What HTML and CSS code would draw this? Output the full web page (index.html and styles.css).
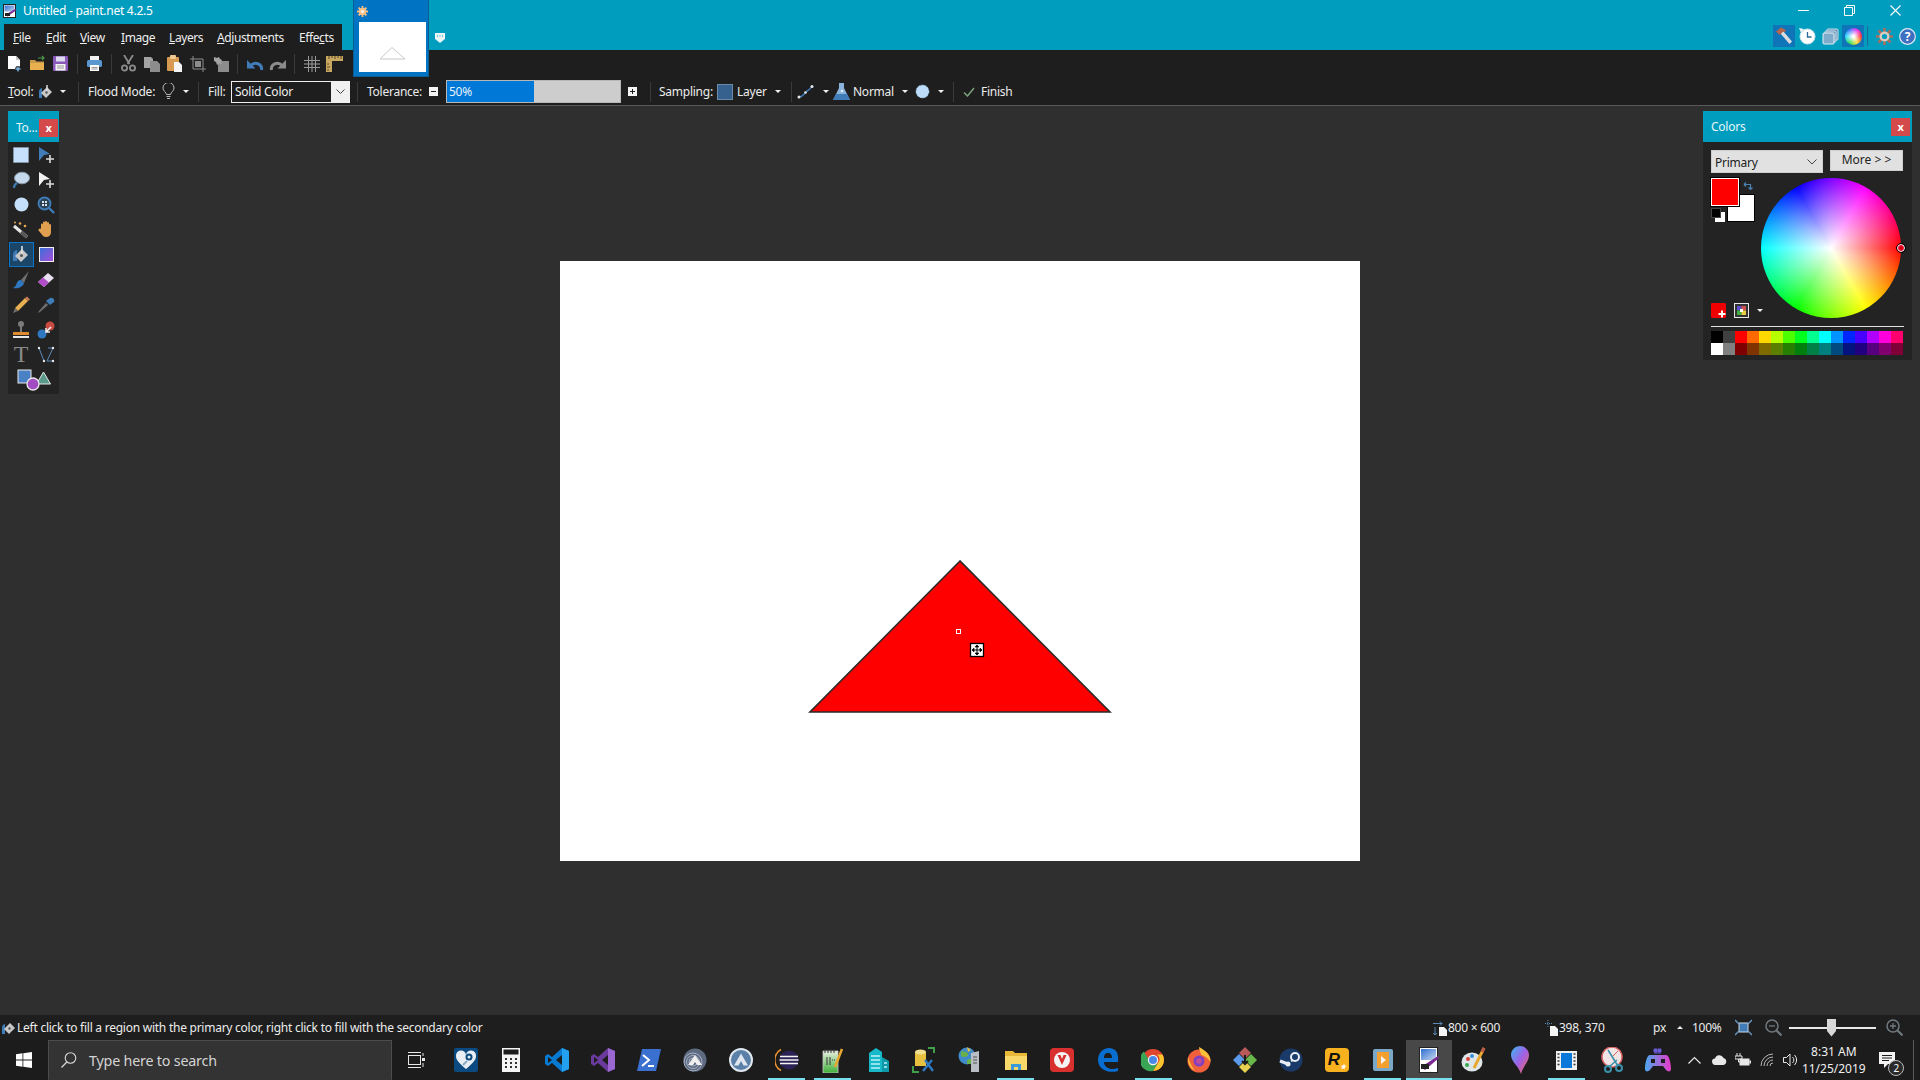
FILE: index.html
```html
<!DOCTYPE html>
<html lang="en">
<head>
<meta charset="utf-8">
<title>Untitled - paint.net 4.2.5</title>
<link rel="stylesheet" href="styles.css">
</head>
<body>
<svg class="defs" width="0" height="0">
  <defs>
    <linearGradient id="gDoc" x1="0" y1="0" x2="1" y2="1"><stop offset="0" stop-color="#2f6fd0"/><stop offset="1" stop-color="#c8d8f0"/></linearGradient>
    <linearGradient id="gPad" x1="0" y1="0" x2="1" y2="0"><stop offset="0" stop-color="#4aa8f0"/><stop offset="1" stop-color="#e83ac8"/></linearGradient>
    <linearGradient id="gBalloon" x1="0" y1="0" x2="1" y2="1"><stop offset="0" stop-color="#3ab8f0"/><stop offset=".5" stop-color="#a060e8"/><stop offset="1" stop-color="#f06a50"/></linearGradient>
    <linearGradient id="gNote" x1="0" y1="0" x2="0" y2="1"><stop offset="0" stop-color="#e8efe0"/><stop offset="1" stop-color="#3fb03a"/></linearGradient>
  </defs>
</svg>
<div class="app">
  <header class="titlebar">
    <div class="caption">
      <svg class="app-icon" width="14" height="14" viewBox="0 0 14 14"><rect x=".5" y=".5" width="12" height="13" fill="#fff" stroke="#222"/><rect x="1.500" y="1.500" width="10" height="6" fill="url(#gDoc)"/><path d="M2 11l10-6 1.500 1-9 6.500z" fill="#7a2a90"/><rect x="2" y="9" width="5" height="3" fill="#222"/></svg>
      <span class="app-title">Untitled - paint.net 4.2.5</span>
      <div class="winbtns">
        <span class="winbtn"><svg width="11" height="11" viewBox="0 0 11 11"><path d="M0 5.500h11" stroke="#fff"/></svg></span>
        <span class="winbtn"><svg width="11" height="11" viewBox="0 0 11 11"><path d="M.5 2.500h8v8h-8zM2.500 2.500v-2h8v8h-2" fill="none" stroke="#fff"/></svg></span>
        <span class="winbtn"><svg width="11" height="11" viewBox="0 0 11 11"><path d="M.5.500l10 10M10.500.500l-10 10" stroke="#fff" stroke-width="1.100"/></svg></span>
      </div>
    </div>
    <div class="menurow">
      <nav class="menu">
        <span class="m-33"><u>F</u>ile</span><span class="m-34"><u>E</u>dit</span><span class="m-41"><u>V</u>iew</span><span class="m-48"><u>I</u>mage</span><span class="m-48"><u>L</u>ayers</span><span class="m-82"><u>A</u>djustments</span><span>Effe<u>c</u>ts</span>
      </nav>
      <div class="wintools">
        <span class="wintool on"><svg width="18" height="18" viewBox="0 0 18 18"><path d="M5.500 6.500l2.500-2.500 9 10.500-2.500 2.500z" fill="#dcdcdc"/><path d="M1 4.500L6 .5l5 2.500-1 2-2-.5-3 3.500z" fill="#b5654a"/></svg></span>
        <span class="wintool"><svg width="18" height="18" viewBox="0 0 18 18"><circle cx="9.500" cy="9.500" r="7.500" fill="#fff" stroke="#cfe6f0"/><path d="M9.500 5v5h4" fill="none" stroke="#2a6a9a" stroke-width="1.300"/><path d="M1 1l5 1-3 4z" fill="#e8f0f4"/></svg></span>
        <span class="wintool"><svg width="17" height="17" viewBox="0 0 17 17"><rect x="5" y="1" width="11" height="11" rx="1" fill="#5d8fb8" stroke="#cfe0ea"/><rect x="3" y="3" width="11" height="11" rx="1" fill="#6d9cc0" stroke="#cfe0ea"/><rect x="1" y="5" width="11" height="11" rx="1" fill="#7faccb" stroke="#e6eff4"/></svg></span>
        <span class="wintool on"><span class="mini-wheel"></span></span>
        <span class="wintool-sep"></span>
        <span class="wintool"><svg width="17" height="17" viewBox="0 0 17 17"><g stroke="#a8705c" stroke-width="2.600"><path d="M8.500 0v17M0 8.500h17M2.500 2.500l12 12M14.500 2.500l-12 12"/></g><circle cx="8.500" cy="8.500" r="5" fill="#d8ccc0"/><circle cx="8.500" cy="8.500" r="2.600" fill="#009dbe"/></svg></span>
        <span class="wintool"><svg width="17" height="17" viewBox="0 0 17 17"><circle cx="8.500" cy="8.500" r="7.800" fill="#3f6fc0" stroke="#e0e8f4" stroke-width="1.200"/><text x="8.500" y="13" class="help-mark">?</text></svg></span>
      </div>
    </div>
  </header>

  <div class="doctab">
    <svg class="doctab-gear" width="11" height="11" viewBox="0 0 11 11"><g stroke="#ffc080" stroke-width="1.800"><path d="M5.500 0v11M0 5.500h11M1.600 1.600l7.800 7.800M9.400 1.600l-7.800 7.800"/></g><circle cx="5.500" cy="5.500" r="3.600" fill="#ffc48a"/><circle cx="5.500" cy="5.500" r="1.400" fill="#f5f5f5"/></svg>
    <div class="doctab-thumb"><svg width="67" height="50" viewBox="0 0 67 50"><path d="M33 25.500L21 37h25z" fill="#fff" stroke="#c8c8c8"/></svg></div>
  </div>
  <svg class="doctab-more" width="10" height="10" viewBox="0 0 10 10"><path d="M0 0h10v6l-5 4-5-4z" fill="#e8f6fa"/><path d="M2 3h1M4.500 3h1M7 3h1" stroke="#0b8db0"/></svg>

  <div class="toolbar row-one">
    <span class="tb"><svg width="17" height="17" viewBox="0 0 17 17"><path d="M2 1h8l4 4v9H2z" fill="#fff"/><path d="M10 1v4h4" fill="#c8c8c8"/><path d="M12 11v6M9 14h6" stroke="#1e1e1e" stroke-width="3.200"/><path d="M12 11.500v5M9.500 14h5" stroke="#7fb8e8" stroke-width="1.400"/></svg></span>
    <span class="tb"><svg width="17" height="17" viewBox="0 0 17 17"><path d="M1 5h5l1.500 1.500H15V15H1z" fill="#c89a4a"/><path d="M1 8h14v7H1z" fill="#e8b04e"/><path d="M9 3h5M13 1l2 2-2 2" fill="none" stroke="#4f9a4a" stroke-width="1.200"/></svg></span>
    <span class="tb"><svg width="17" height="17" viewBox="0 0 17 17"><rect x="1" y="1" width="15" height="15" rx="1" fill="#8a58b8"/><rect x="4" y="1.500" width="9" height="5" fill="#dcdcf0"/><rect x="3.500" y="9" width="10" height="6.500" fill="#f5f5f5"/><path d="M5 11h7M5 13h7" stroke="#999"/></svg></span>
    <span class="tb-sep"></span>
    <span class="tb"><svg width="17" height="17" viewBox="0 0 17 17"><rect x="4" y="1" width="9" height="5" fill="#f0f0f0"/><rect x="1" y="5" width="15" height="7" rx="1.500" fill="#5a96d0"/><rect x="4" y="10" width="9" height="6" fill="#fff"/><path d="M5.500 12.500h6M5.500 14h6" stroke="#999"/></svg></span>
    <span class="tb-sep"></span>
    <span class="tb"><svg width="15" height="17" viewBox="0 0 15 17"><path d="M3 0l5.500 9M12 0L6.500 9" stroke="#8c8c8c" stroke-width="1.800"/><circle cx="3.500" cy="13" r="2.600" fill="none" stroke="#8c8c8c" stroke-width="1.800"/><circle cx="11.500" cy="13" r="2.600" fill="none" stroke="#8c8c8c" stroke-width="1.800"/></svg></span>
    <span class="tb"><svg width="16" height="16" viewBox="0 0 16 16"><path d="M0 1h7l2 2v9H0z" fill="#a4a4a4"/><path d="M6 5h7l3 3v8H6z" fill="#8c8c8c"/></svg></span>
    <span class="tb"><svg width="17" height="17" viewBox="0 0 17 17"><rect x="1" y="2" width="12" height="14" rx="1" fill="#d89a50"/><rect x="4" y="0" width="6" height="4" rx="1" fill="#eec890"/><path d="M8 7h5l3 3v7H8z" fill="#f4f4f4"/></svg></span>
    <span class="tb"><svg width="16" height="16" viewBox="0 0 16 16"><path d="M3 0v13h13M0 3h13v13" fill="none" stroke="#8c8c8c"/><rect x="5" y="5" width="6" height="6" fill="#8c8c8c"/></svg></span>
    <span class="tb"><svg width="16" height="16" viewBox="0 0 16 16"><rect x="5" y="5" width="11" height="11" fill="#8c8c8c"/><path d="M1 1l3 1 2-1 1 2 2 1-1 2 1 2-3-.5-2 1.500-1-3-2-1z" fill="#a4a4a4"/></svg></span>
    <span class="tb-sep"></span>
    <span class="tb"><svg width="18" height="16" viewBox="0 0 18 16"><path d="M15.500 14c1-6-6-9-11-4.500" fill="none" stroke="#3f7cb8" stroke-width="3"/><path d="M1 4v8.500h8.500z" fill="#3f7cb8"/></svg></span>
    <span class="tb"><svg width="18" height="16" viewBox="0 0 18 16"><path d="M2.500 14c-1-6 6-9 11-4.500" fill="none" stroke="#8c8c8c" stroke-width="3"/><path d="M17 4v8.500H8.500z" fill="#8c8c8c"/></svg></span>
    <span class="tb-sep"></span>
    <span class="tb"><svg width="16" height="16" viewBox="0 0 16 16"><path d="M4.500 0v16M8 0v16M11.500 0v16M0 4.500h16M0 8h16M0 11.500h16" stroke="#9a9a9a"/></svg></span>
    <span class="tb"><svg width="17" height="17" viewBox="0 0 17 17"><path d="M0 1h17v5H6v11H0z" fill="#c8a860"/><path d="M3 1v3M6 1v2M9 1v3M12 1v2M15 1v3M1 9h2M1 12h3M1 15h2" stroke="#5a4620"/></svg></span>
  </div>

  <div class="toolbar row-two">
    <span class="lbl w-30"><u>T</u>ool:</span>
    <svg width="16" height="16" viewBox="0 0 16 16"><path d="M1 8c0-3 2-4 3-4v10H1z" fill="#3f7cb8"/><path d="M3 9l6-6 5 5-6 6z" fill="#c8c8c8"/><path d="M9 1v6" stroke="#d8d8d8" stroke-width="1.500"/><circle cx="8.500" cy="8.500" r="1.200" fill="#555"/></svg>
    <span class="caret ml-6"></span>
    <span class="sep ml-12"></span>
    <span class="lbl ml-9 w-66">Flood Mode:</span>
    <svg class="ml-8" width="13" height="17" viewBox="0 0 13 17"><path d="M4.500 11.500C4 9 1 8 1 5a5.500 5.500 0 0 1 11 0c0 3-3 4-3.500 6.500z" fill="none" stroke="#b8b8b8"/><path d="M4.500 13.500h4M5 15.500h3" stroke="#b8b8b8"/></svg>
    <span class="caret ml-8"></span>
    <span class="sep ml-9"></span>
    <span class="lbl ml-9 w-17">Fill:</span>
    <div class="fill-select ml-6"><span class="fill-value">Solid Color</span><span class="fill-drop"><svg width="9" height="5" viewBox="0 0 9 5"><path d="M.5.500l4 4 4-4" fill="none" stroke="#444"/></svg></span></div>
    <span class="sep ml-7"></span>
    <span class="lbl ml-9 w-52">Tolerance:</span>
    <span class="stepper ml-10"><i class="step-h"></i></span>
    <div class="tolerance ml-8"><div class="tol-fill">50%</div></div>
    <span class="stepper ml-7"><i class="step-h"></i><i class="step-v"></i></span>
    <span class="sep ml-13"></span>
    <span class="lbl ml-8 w-52">Sampling:</span>
    <span class="layer-swatch ml-6"></span>
    <span class="lbl ml-4 w-28">Layer</span>
    <span class="caret ml-10"></span>
    <span class="sep ml-10"></span>
    <svg class="ml-5" width="18" height="16" viewBox="0 0 18 16"><path d="M2 13c4 0 4-2 7-5s4-2 6-6" fill="none" stroke="#3f7cb8" stroke-width="1.400"/><circle cx="2" cy="13" r="1.500" fill="#e8e8e8"/><circle cx="8.500" cy="8.500" r="1.300" fill="#e8e8e8"/><circle cx="15" cy="2.500" r="1.500" fill="#e8e8e8"/></svg>
    <span class="caret ml-8"></span>
    <svg class="ml-4" width="17" height="17" viewBox="0 0 17 17"><path d="M6 0h5v5l6 12H0L6 5z" fill="#8ab4dc"/><path d="M3 11h11l3 6H0z" fill="#3f7cb8"/><circle cx="9" cy="8" r="1.200" fill="#e8f4ff"/></svg>
    <span class="lbl ml-3 w-39">Normal</span>
    <span class="caret ml-10"></span>
    <svg class="ml-7" width="15" height="15" viewBox="0 0 15 15"><circle cx="7.500" cy="7.500" r="6.800" fill="#bcdcfa"/><path d="M7.500.7a6.800 6.800 0 0 1 0 13.600a6.800 6.800 0 0 1 0-13.600" fill="none" stroke="#30404c" stroke-dasharray="2 2"/></svg>
    <span class="caret ml-8"></span>
    <span class="sep ml-9"></span>
    <svg class="ml-9" width="12" height="10" viewBox="0 0 12 10"><path d="M1 5.500l3.500 3.500L11 1" fill="none" stroke="#7aa07a" stroke-width="1.500"/></svg>
    <span class="lbl ml-6">Finish</span>
  </div>

  <main class="workspace">
    <section class="tools-win">
      <div class="win-head tools-head"><span>To...</span><span class="win-close">x</span></div>
      <div class="tools-grid">
        <span class="tool"><svg width="16" height="16" viewBox="0 0 16 16"><rect x=".5" y=".5" width="15" height="15" fill="#c6e0fb" stroke="#8a9cad" stroke-dasharray="2 1"/></svg></span>
        <span class="tool"><svg width="18" height="18" viewBox="0 0 18 18"><path d="M2 1l11 7-6 1-5 6z" fill="#3f7cb8"/><path d="M13 9v8M9 13h8" stroke="#dcdcdc" stroke-width="1.600"/></svg></span>
        <span class="tool"><svg width="18" height="18" viewBox="0 0 18 18"><ellipse cx="10" cy="7" rx="7.500" ry="5.800" fill="#c6d8ec" stroke="#8a9cad"/><path d="M5 12c-2 1-3 3-3 5" fill="none" stroke="#3f7cb8" stroke-width="2"/></svg></span>
        <span class="tool"><svg width="18" height="18" viewBox="0 0 18 18"><path d="M2 1l11 7-6 1-5 6z" fill="#f2f2f2"/><path d="M13 9v8M9 13h8" stroke="#dcdcdc" stroke-width="1.600"/></svg></span>
        <span class="tool"><svg width="15" height="15" viewBox="0 0 15 15"><circle cx="7.500" cy="7.500" r="7" fill="#c6e0fb"/></svg></span>
        <span class="tool"><svg width="18" height="18" viewBox="0 0 18 18"><circle cx="7.500" cy="7.500" r="6" fill="#2c4054" stroke="#3f7cb8" stroke-width="1.800"/><path d="M5 5h2v2H5zM8 5h2v2H8zM5 8h2v2H5zM8 8h2v2H8z" fill="#d8e4ee"/><path d="M12 12l5 5" stroke="#3f7cb8" stroke-width="2.400"/></svg></span>
        <span class="tool"><svg width="18" height="18" viewBox="0 0 18 18"><path d="M2 5l13 11" stroke="#e8e8e8" stroke-width="3"/><path d="M9 11l6 5" stroke="#555" stroke-width="3"/><circle cx="8" cy="2.500" r="1.300" fill="#e8a84e"/><circle cx="13" cy="5" r="1.300" fill="#e8a84e"/><circle cx="3" cy="1.500" r="1" fill="#e8a84e"/></svg></span>
        <span class="tool"><svg width="16" height="17" viewBox="0 0 16 17"><path d="M3 8V3.500a1 1 0 0 1 2 0V1.500a1 1 0 0 1 2 0V1a1 1 0 0 1 2 0v1a1 1 0 0 1 2 0v2a1 1 0 0 1 2 0v7c0 3-2 5-5 5-2 0-3.500-1-4.500-3L.5 9.500C0 8 2 7 3 8z" fill="#e0a050"/></svg></span>
        <span class="tool selected"><svg width="18" height="18" viewBox="0 0 18 18"><path d="M1 9c0-3 2-5 4-5v11H1z" fill="#3f7cb8"/><path d="M3 10l7-7 6 6-7 7z" fill="#c8c8c8"/><path d="M10 0v8" stroke="#e0e0e0" stroke-width="1.600"/><circle cx="9.500" cy="9.500" r="1.500" fill="#555"/></svg></span>
        <span class="tool"><span class="grad-tool"></span></span>
        <span class="tool"><svg width="18" height="18" viewBox="0 0 18 18"><path d="M17 0L9 9l3 3z" fill="#707070"/><path d="M9 9c-3 0-4 2-4.500 4S2.500 16 1 17c5 1 10-1 11-5z" fill="#2f78c0"/></svg></span>
        <span class="tool"><svg width="18" height="16" viewBox="0 0 18 16"><path d="M1 10L11 1l6 5-10 9z" fill="#e8e0f0"/><path d="M1 10l5-4.500 6 5L7 15z" fill="#b04cc8"/></svg></span>
        <span class="tool"><svg width="18" height="18" viewBox="0 0 18 18"><path d="M3 12L13 2l3 3L6 15z" fill="#e8b050"/><path d="M13 2l2-1.500 3 3L16 5z" fill="#c87a5a"/><path d="M3 12l-2 5 5-2z" fill="#707070"/></svg></span>
        <span class="tool"><svg width="18" height="18" viewBox="0 0 18 18"><path d="M9 7l-7 8-1 2 2-1 8-7z" fill="#707070"/><path d="M9 5l4 4 4-3c1-2-1-5-4-4z" fill="#3f7cb8"/></svg></span>
        <span class="tool"><svg width="18" height="18" viewBox="0 0 18 18"><circle cx="9" cy="3" r="3" fill="#7a7a7a"/><path d="M8 5h2v6H8z" fill="#7a7a7a"/><path d="M1 11h16v3H1z" fill="#e08a30"/><path d="M1 15h16v2H1z" fill="#e8e8e8"/></svg></span>
        <span class="tool"><svg width="18" height="18" viewBox="0 0 18 18"><circle cx="13" cy="5" r="4.500" fill="#c84a40"/><circle cx="5" cy="13" r="4.500" fill="#2f78c0"/><path d="M14 6l-5 5M9 7v4h4" fill="none" stroke="#f0f0f0" stroke-width="1.600"/></svg></span>
        <span class="tool tool-text">T</span>
        <span class="tool"><svg width="18" height="18" viewBox="0 0 18 18"><path d="M2 2l5 13M11 2h5l-6 13h6" fill="none" stroke="#5a8ab8"/><g fill="#e8e8e8"><circle cx="2" cy="2" r="1.200"/><circle cx="7" cy="15" r="1.200"/><circle cx="16" cy="2" r="1.200"/><circle cx="16" cy="15" r="1.200"/></g></svg></span>
        <span class="tool tool-wide"><svg width="34" height="22" viewBox="0 0 34 22"><rect x="1" y="1" width="13" height="13" fill="#4a80c4" stroke="#e8e8e8"/><path d="M26.500 3l7 12h-14z" fill="#5a9a8a" stroke="#e8e8e8"/><circle cx="16" cy="15" r="6" fill="#a24cc4" stroke="#e8e8e8" stroke-width="1.300"/></svg></span>
      </div>
    </section>

    <div class="canvas">
      <svg class="drawing" width="800" height="600" viewBox="0 0 800 600">
        <path d="M400 300L250 451h300z" fill="#ff0000" stroke="#2a2a2a" stroke-width="1.600"/>
        <rect x="396.500" y="368.500" width="4" height="4" fill="#ff0000" stroke="#fff"/>
        <rect x="410.500" y="382.500" width="13" height="13" fill="#fff" stroke="#000" stroke-width="1.300"/>
        <path d="M417 384v10M412 389h10" stroke="#000"/>
        <path d="M417 384l-2 2h4zM417 394l-2-2h4zM412 389l2-2v4zM422 389l-2-2v4z" stroke="#000" stroke-width=".6"/>
      </svg>
    </div>

    <section class="colors-win">
      <div class="win-head colors-head"><span>Colors</span><span class="win-close">x</span></div>
      <div class="colors-body">
        <div class="colors-top">
          <div class="primary-select"><span>Primary</span><svg width="10" height="6" viewBox="0 0 10 6"><path d="M.5.500l4.500 4.500 4.500-4.500" fill="none" stroke="#444"/></svg></div>
          <div class="more-btn">More &gt; &gt;</div>
        </div>
        <div class="colors-mid">
          <div class="swatch-col">
            <div class="swatches">
              <span class="sw-secondary"></span>
              <span class="sw-primary"></span>
              <span class="sw-mini-w"></span>
              <span class="sw-mini-b"></span>
              <svg class="sw-swap" width="10" height="10" viewBox="0 0 10 10"><path d="M1 3.500h6.500v5M1 3.500l2-2M1 3.500l2 2M7.500 8.500l-2-2M7.500 8.500l2-2" fill="none" stroke="#4a80b0" stroke-width="1.200"/></svg>
            </div>
            <div class="swatch-tools">
              <svg width="15" height="15" viewBox="0 0 15 15"><rect width="15" height="15" rx="1" fill="#f00000"/><path d="M11 7.500v7M7.500 11h7" stroke="#fff" stroke-width="2"/></svg>
              <svg width="15" height="15" viewBox="0 0 15 15"><rect x=".5" y=".5" width="14" height="14" fill="#333" stroke="#e8e8e8"/><rect x="3" y="3" width="4.500" height="4.500" fill="#5a50d0"/><rect x="7.500" y="3" width="4.500" height="4.500" fill="#d05050"/><rect x="3" y="7.500" width="4.500" height="4.500" fill="#40b040"/><rect x="7.500" y="7.500" width="4.500" height="4.500" fill="#e8d040"/><rect x="6" y="6" width="3" height="3" fill="#fff"/></svg>
              <span class="caret"></span>
            </div>
          </div>
          <div class="wheel"><span class="wheel-marker"></span></div>
        </div>
        <div class="palette-rule"></div>
        <div class="palette">
          <i class="c-000000"></i><i class="c-404040"></i><i class="c-ff0000"></i><i class="c-ff6a00"></i><i class="c-ffd800"></i><i class="c-b6ff00"></i><i class="c-4cff00"></i><i class="c-00ff21"></i><i class="c-00ff90"></i><i class="c-00ffff"></i><i class="c-0094ff"></i><i class="c-0026ff"></i><i class="c-4800ff"></i><i class="c-b200ff"></i><i class="c-ff00dc"></i><i class="c-ff006e"></i>
          <i class="c-ffffff"></i><i class="c-808080"></i><i class="c-7f0000"></i><i class="c-7f3300"></i><i class="c-7f6a00"></i><i class="c-5b7f00"></i><i class="c-267f00"></i><i class="c-007f0e"></i><i class="c-007f46"></i><i class="c-007f7f"></i><i class="c-004a7f"></i><i class="c-00137f"></i><i class="c-21007f"></i><i class="c-57007f"></i><i class="c-7f006e"></i><i class="c-7f0037"></i>
        </div>
      </div>
    </section>
  </main>

  <footer class="statusbar">
    <svg class="status-tool" width="16" height="16" viewBox="0 0 16 16"><path d="M1 8c0-3 2-4 3-4v10H1z" fill="#3f7cb8"/><path d="M3 9l6-6 5 5-6 6z" fill="#c8c8c8"/><circle cx="8.500" cy="8.500" r="1.200" fill="#555"/></svg>
    <span class="status-text">Left click to fill a region with the primary color, right click to fill with the secondary color</span>
    <div class="status-right">
      <svg width="16" height="16" viewBox="0 0 16 16"><path d="M1 3.500h9M8 1.500l2 2-2 2M3 7v8M1 13l2 2 2-2" fill="none" stroke="#5a8ab8"/><path d="M7 7h5l3 3v6H7z" fill="#f4f4f4"/></svg>
      <span class="lbl w-54">800 × 600</span>
      <svg class="ml-43" width="14" height="16" viewBox="0 0 14 16"><path d="M3 0v7M0 3.500h7" stroke="#5a8ab8" stroke-dasharray="1 1"/><path d="M5 6h5l3 3v7H5z" fill="#f4f4f4"/></svg>
      <span class="lbl w-45">398, 370</span>
      <span class="lbl ml-49 w-14">px</span>
      <span class="caret caret-up ml-10"></span>
      <span class="lbl ml-9 w-29">100%</span>
      <svg class="ml-14" width="17" height="17" viewBox="0 0 17 17"><rect x="4" y="4" width="9" height="9" fill="#3f7cb8" stroke="#cfd8e0"/><path d="M0 1l4 4M17 1l-4 4M0 16l4-4M17 16l-4-4" stroke="#6a9ac8" stroke-width="1.300"/></svg>
      <svg class="ml-13" width="17" height="17" viewBox="0 0 17 17"><circle cx="7" cy="7" r="6" fill="none" stroke="#707a80" stroke-width="1.500"/><path d="M4 7h6" stroke="#707a80" stroke-width="1.300"/><path d="M11.500 11.500l5 5" stroke="#707a80" stroke-width="2"/></svg>
      <div class="zoom-slider ml-7"><span class="zoom-thumb"></span></div>
      <svg class="ml-10" width="17" height="17" viewBox="0 0 17 17"><circle cx="7" cy="7" r="6" fill="none" stroke="#707a80" stroke-width="1.500"/><path d="M4 7h6M7 4v6" stroke="#707a80" stroke-width="1.300"/><path d="M11.500 11.500l5 5" stroke="#707a80" stroke-width="2"/></svg>
    </div>
  </footer>

  <div class="taskbar">
    <span class="start"><svg width="16" height="16" viewBox="0 0 16 16"><path d="M0 2.200l6.500-.9v6.300H0zM7.300 1.200L16 0v7.600H7.300zM0 8.400h6.500v6.300L0 13.800zM7.300 8.400H16V16l-8.700-1.200z" fill="#fff"/></svg></span>
    <div class="search"><svg width="16" height="16" viewBox="0 0 16 16"><circle cx="9.500" cy="6" r="5.300" fill="none" stroke="#d8d8d8" stroke-width="1.100"/><path d="M5.800 10L.5 15.500" stroke="#d8d8d8" stroke-width="1.200"/></svg><span>Type here to search</span></div>

    <span class="task taskview"><svg width="17" height="16" viewBox="0 0 17 16"><path d="M0 .5h13M0 15.500h13" stroke="#e8e8e8"/><rect x=".5" y="3.500" width="12" height="9" fill="none" stroke="#e8e8e8"/><path d="M15 1v3" stroke="#e8e8e8"/><rect x="14" y="6" width="3" height="3" fill="#e8e8e8"/><path d="M15 11v4" stroke="#e8e8e8"/></svg></span>
    <span class="task"><svg width="24" height="24" viewBox="0 0 24 24"><rect width="24" height="24" rx="2" fill="#0b4a80"/><path d="M12 21C5 15 2 12 2 8a5 5 0 0 1 10-1 5 5 0 0 1 10 1c0 4-3 7-10 13z" fill="#e8eef4"/><circle cx="15" cy="9" r="3.500" fill="#0b4a80"/><circle cx="15" cy="9" r="1.500" fill="#e8eef4"/><path d="M13 13l-4 4" stroke="#8aa8c0" stroke-width="2"/></svg></span>
    <span class="task"><svg width="18" height="24" viewBox="0 0 18 24"><rect width="18" height="24" fill="#f4f4f4"/><rect x="1.500" y="1.500" width="15" height="5" fill="#1c1c1c"/><path d="M3 10h2v2H3zM8 10h2v2H8zM13 10h2v2h-2zM3 14h2v2H3zM8 14h2v2H8zM13 14h2v2h-2zM3 18h2v2H3zM8 18h2v2H8zM13 18h2v2h-2z" fill="#333"/></svg></span>
    <span class="task"><svg width="24" height="24" viewBox="0 0 24 24"><path d="M17 0l7 3v18l-7 3-10-9-4 3-3-2V8l3-2 4 3z" fill="#0a7ad0"/><path d="M17 0l7 3v18l-7 3z" fill="#23a0ee"/><path d="M17 7l-6 5 6 5z" fill="#1c1c1c"/><path d="M3 9l4 3-4 3z" fill="#1c1c1c"/></svg></span>
    <span class="task"><svg width="24" height="24" viewBox="0 0 24 24"><path d="M17 0l7 3v18l-7 3-10-9-4 3-3-2V8l3-2 4 3z" fill="#6a3a9c"/><path d="M17 0l7 3v18l-7 3z" fill="#9a68d0"/><path d="M17 7l-6 5 6 5z" fill="#1c1c1c"/><path d="M3 9l4 3-4 3z" fill="#1c1c1c"/></svg></span>
    <span class="task"><svg width="24" height="22" viewBox="0 0 24 22"><path d="M5 0h19l-5 22H0z" fill="#3a70d0"/><path d="M6 6l6 5-7 6" fill="none" stroke="#fff" stroke-width="2"/><path d="M11 17h6" stroke="#fff" stroke-width="2"/></svg></span>
    <span class="task"><svg width="24" height="24" viewBox="0 0 24 24"><circle cx="12" cy="12" r="11.500" fill="#5d6a80"/><g fill="none" stroke="#a8b4c8"><circle cx="10" cy="14" r="9"/><circle cx="10" cy="14" r="6.500"/><circle cx="10" cy="14" r="4"/></g><path d="M12 7l7 10h-5l-2-3-2 3H5z" fill="#f0f0f0"/></svg></span>
    <span class="task"><svg width="24" height="24" viewBox="0 0 24 24"><circle cx="12" cy="12" r="11" fill="#5a80a8" stroke="#dfe6ee" stroke-width="2"/><path d="M12 5.500l7 12h-4.500L12 13l-2.500 4.500H5z" fill="#dfe6ee"/></svg></span>
    <span class="task running"><svg width="24" height="24" viewBox="0 0 24 24"><path d="M6 1.500A12 12 0 0 0 6 22.500" fill="none" stroke="#e8912e" stroke-width="1.600"/><circle cx="14" cy="12" r="9.500" fill="#2c2255"/><path d="M5 8.500h18M4.500 12h19M5 15.500h18" stroke="#f4f4f4" stroke-width="1.600"/></svg></span>
    <span class="task running"><svg width="24" height="26" viewBox="0 0 24 26"><path d="M3 4h15v22H3z" fill="url(#gNote)" stroke="#c8c8c8" stroke-width=".8"/><path d="M5 2v4M8 2v4M11 2v4M14 2v4" stroke="#333"/><path d="M7 10v8M10 10v8" stroke="#333"/><path d="M12 13h4" stroke="#333" stroke-dasharray="1 1"/><path d="M22 2L15 20" stroke="#e8a830" stroke-width="2.500"/></svg></span>
    <span class="task"><svg width="22" height="26" viewBox="0 0 22 26"><path d="M2 6l7-5 6 4v20H2z" fill="#17b8c8"/><path d="M15 10l7 4v11h-7z" fill="#0f98a8"/><path d="M4 9h9M4 13h9M4 17h9M4 21h9M17 16h3M17 20h3" stroke="#bff0f6" stroke-width="1.500"/></svg></span>
    <span class="task"><svg width="24" height="26" viewBox="0 0 24 26"><path d="M3 5h11v14H3z" fill="#e8c040"/><ellipse cx="8.500" cy="5" rx="5.500" ry="2.500" fill="#f0e090"/><path d="M16 1h6v5M1 19v6h6" fill="none" stroke="#3fa04a" stroke-width="2"/><path d="M11 24l9-11M13 13l8 11" stroke="#2f78c0" stroke-width="2.400"/></svg></span>
    <span class="task"><svg width="24" height="26" viewBox="0 0 24 26"><circle cx="9" cy="9" r="8.500" fill="#3f8ac8"/><path d="M3 4c3 1 6 0 7 3S5 11 3 9zM9 13l5-2v6H9z" fill="#6ab04a"/><path d="M9 0l4 3-3 2z" fill="#e8c040"/><path d="M13 6l8-2v21h-8z" fill="#b8bec4"/><path d="M15 10h4M15 13h4M15 16h4" stroke="#555"/></svg></span>
    <span class="task running"><svg width="22" height="20" viewBox="0 0 22 20"><path d="M0 1h8l2 2h12v17H0z" fill="#e8b838"/><path d="M0 6h22v14H0z" fill="#f8d868"/><path d="M6 20v-6h10v6h-3v-3H9v3z" fill="#3a9ad8"/></svg></span>
    <span class="task"><svg width="24" height="24" viewBox="0 0 24 24"><rect width="24" height="24" rx="4" fill="#d8302f"/><circle cx="12" cy="12" r="8" fill="#f4f4f4"/><path d="M7.500 7l4.500 10 4.500-10h-3L12 11l-1.500-4z" fill="#d8302f"/></svg></span>
    <span class="task"><svg width="22" height="24" viewBox="0 0 22 24"><path d="M21 14H7c0 5 6 9 14 6v3C11 26 1 21 1 12 1 4 7 0 12 0c6 0 10 4 9 14zM7 10h8c0-3-1-5-4-5s-4 2-4 5z" fill="#0a6ed0"/></svg></span>
    <span class="task running"><svg width="24" height="24" viewBox="0 0 24 24"><circle cx="12" cy="12" r="11" fill="#e0452f"/><path d="M21.500 6.500A11 11 0 0 1 12 23l5-8a5.500 5.500 0 0 0-1-8.500z" fill="#f7c52e"/><path d="M12 23A11 11 0 0 1 3 3.500l4.500 8a5.500 5.500 0 0 0 9.500 3.500z" fill="#3aa655"/><circle cx="12" cy="12" r="5.200" fill="#f4f4f4"/><circle cx="12" cy="12" r="4" fill="#4a88e8"/></svg></span>
    <span class="task"><svg width="24" height="26" viewBox="0 0 24 26"><circle cx="12" cy="14" r="11.500" fill="#f0603a"/><path d="M12 0c6 3 12 8 11.500 15-3-4-5-6-9-7-1-3-2.500-5-2.500-8z" fill="#fbbf3a"/><path d="M1 10c-.5 6 2 11 7 14-3-4-5-8-7-14z" fill="#fbbf3a"/><circle cx="12" cy="14" r="5.500" fill="#8040c0"/><circle cx="12" cy="14" r="2.800" fill="#c04a9a"/></svg></span>
    <span class="task"><svg width="24" height="26" viewBox="0 0 24 26"><path d="M12 0l6 6-6 6-6-6z" fill="#b85a5a"/><path d="M6 7l6 6-6 6-6-6z" fill="#5a9ae8"/><path d="M18 7l6 6-6 6-6-6z" fill="#6ab84a"/><path d="M12 14l6 6-6 6-6-6z" fill="#e8d050"/><path d="M12 8v9M9 14l3 3 3-3" stroke="#1c1c1c" stroke-width="2" fill="none"/></svg></span>
    <span class="task"><svg width="24" height="24" viewBox="0 0 24 24"><circle cx="12" cy="12" r="11.500" fill="#1a3a6a"/><circle cx="16" cy="9" r="4" fill="none" stroke="#e8eef4" stroke-width="2"/><path d="M1 13l8 3" stroke="#e8eef4" stroke-width="3"/><circle cx="9" cy="16" r="2.500" fill="#e8eef4"/><path d="M12 13l2-1" stroke="#e8eef4" stroke-width="2"/></svg></span>
    <span class="task"><span class="rockstar">R<sub>★</sub></span></span>
    <span class="task running"><svg width="22" height="24" viewBox="0 0 22 24"><rect x="1" y="1" width="20" height="22" rx="2" fill="#7aa8c8"/><rect x="5" y="4" width="12" height="16" fill="#f4a030"/><path d="M9 8l5 4-5 4z" fill="#f4f4f4"/></svg></span>
    <span class="task running active"><svg width="20" height="26" viewBox="0 0 20 26"><rect x=".5" y=".5" width="18" height="25" fill="#fff" stroke="#222"/><rect x="2" y="2" width="15" height="11" fill="url(#gDoc)"/><path d="M2 20L19 9l1 2L6 23z" fill="#7a2a90"/><rect x="2" y="17" width="8" height="5" fill="#222"/></svg></span>
    <span class="task"><svg width="26" height="26" viewBox="0 0 26 26"><ellipse cx="11" cy="15" rx="10.500" ry="9.500" fill="#dfe6ea"/><circle cx="7" cy="12" r="2" fill="#d8403a"/><circle cx="11" cy="9" r="2" fill="#3a90d8"/><circle cx="6" cy="18" r="2" fill="#3aa655"/><path d="M23 1L13 21" stroke="#e8a830" stroke-width="3"/><path d="M23 1l-2 4" stroke="#c0584a" stroke-width="3"/></svg></span>
    <span class="task"><svg width="18" height="28" viewBox="0 0 18 28"><path d="M9 0c5 0 9 4 9 9 0 7-6 11-8 19C8 20 0 16 0 9c0-5 4-9 9-9z" fill="url(#gBalloon)"/></svg></span>
    <span class="task running"><svg width="21" height="19" viewBox="0 0 21 19"><rect width="21" height="19" fill="#f0f0f0"/><rect x="5" y="2" width="11" height="15" fill="#0a78d8"/><path d="M1.500 3h2M1.500 6.500h2M1.500 10h2M1.500 13.500h2M17.500 3h2M17.500 6.500h2M17.500 10h2M17.500 13.500h2" stroke="#333" stroke-width="1.500"/></svg></span>
    <span class="task"><svg width="24" height="26" viewBox="0 0 24 26"><circle cx="12" cy="10" r="10" fill="#f0e4e4" stroke="#d86060" stroke-width="1.500" transform="rotate(-20 12 10)"/><path d="M12 10l6-6" stroke="#d86060"/><path d="M8 3l10 16M17 13l-8 7" stroke="#3a90a8" stroke-width="1.600"/><circle cx="19" cy="21" r="3" fill="none" stroke="#3a90a8" stroke-width="2"/><circle cx="8" cy="22" r="3" fill="none" stroke="#3a90a8" stroke-width="2"/></svg></span>
    <span class="task"><svg width="26" height="24" viewBox="0 0 26 24"><path d="M5 7h16c3 0 5 8 5 14 0 3-3 3-5 1l-3-4H8l-3 4c-2 2-5 2-5-1 0-6 2-14 5-14z" fill="url(#gPad)"/><path d="M9 1h3v3H9zM13 1h3v3h-3zM9 5h7" stroke="#6a5ad8" fill="#6a5ad8"/><rect x="6" y="11" width="4" height="4" fill="#1c1c1c"/><rect x="16" y="11" width="4" height="4" fill="#1c1c1c"/></svg></span>

    <div class="tray">
      <span class="tray-item narrow"><svg width="13" height="8" viewBox="0 0 13 8"><path d="M.5 7.500l6-6 6 6" fill="none" stroke="#e8e8e8" stroke-width="1.200"/></svg></span>
      <span class="tray-item gap"><svg width="15" height="10" viewBox="0 0 15 10"><path d="M3.500 10a3.200 3.200 0 0 1-.5-6.400 4.500 4.500 0 0 1 8.500-.6 3.600 3.600 0 0 1 0 7z" fill="#e8e8e8"/></svg></span>
      <span class="tray-item"><svg width="16" height="14" viewBox="0 0 16 14"><path d="M2 0v3M5 0v3M0 3h7v3H0zM3.500 6v3h2" fill="none" stroke="#e8e8e8"/><rect x="4.500" y="5.500" width="10" height="7" fill="#e8e8e8"/><rect x="14.500" y="7.500" width="1.500" height="3" fill="#e8e8e8"/></svg></span>
      <span class="tray-item"><svg width="15" height="14" viewBox="0 0 15 14"><path d="M1 13a12 12 0 0 1 12-12M4 13a9 9 0 0 1 9-9M7 13a6 6 0 0 1 6-6M10 13a3 3 0 0 1 3-3" fill="none" stroke="#b8b8b8"/></svg></span>
      <span class="tray-item small"><svg width="15" height="14" viewBox="0 0 15 14"><path d="M.5 4.500h3l3.500-3.500v12l-3.500-3.500h-3z" fill="none" stroke="#e8e8e8"/><path d="M9.500 4a4 4 0 0 1 0 6M11.500 2a7 7 0 0 1 0 10" fill="none" stroke="#e8e8e8"/></svg></span>
      <div class="clock"><span>8:31 AM</span><span>11/25/2019</span></div>
      <span class="notify"><svg width="17" height="17" viewBox="0 0 17 17"><path d="M0 0h16v12h-7l-4 4v-4H0z" fill="#f4f4f4"/><path d="M3 3.500h10M3 6h10M3 8.500h7" stroke="#1c1c1c"/></svg><span class="notify-badge">2</span></span>
      <span class="show-desktop"></span>
    </div>
  </div>
</div>
</body>
</html>
```
FILE: styles.css
```css
* { box-sizing: border-box; }
html, body { margin: 0; padding: 0; }
body { width: 1920px; height: 1080px; overflow: hidden; background: #2f2f2f; font-family: "Noto Sans", "Open Sans", sans-serif; font-size: 12px; color: #e8e8e8; letter-spacing: -0.25px; }
.defs { position: absolute; }
svg { display: block; flex: none; }
.app { position: relative; display: flex; flex-direction: column; width: 1920px; height: 1080px; }

/* title bar */
.titlebar { display: flex; flex-direction: column; height: 50px; background: #009dbe; flex: none; }
.caption { display: flex; align-items: center; height: 24px; }
.app-icon { margin: 0 6px 3px 3px; }
.app-title { color: #fff; margin-bottom: 4px; }
.winbtns { display: flex; margin-left: auto; padding-right: 2px; margin-bottom: 4px; }
.winbtn { display: flex; align-items: center; justify-content: center; width: 46px; height: 20px; }
.menurow { display: flex; justify-content: space-between; height: 26px; }
.menu { display: flex; align-items: center; width: 338px; margin-left: 4px; padding-left: 9px; background: #1e1e1e; color: #efefef; letter-spacing: -0.4px; white-space: nowrap; }
.m-33 { width: 33px; } .m-34 { width: 34px; } .m-41 { width: 41px; } .m-48 { width: 48px; } .m-82 { width: 82px; }
.wintools { display: flex; align-items: center; gap: 1px; padding: 0 2px 2px 0; }
.wintool { display: flex; align-items: center; justify-content: center; width: 22px; height: 22px; }
.wintool.on { background: #0f74b8; }
.wintool-sep { width: 1px; height: 20px; margin: 0 4px 0 2px; background: #1b6c88; }
.mini-wheel { width: 17px; height: 17px; border-radius: 50%; background: radial-gradient(circle closest-side, #fff 10%, rgba(255,255,255,0) 90%), conic-gradient(from 90deg, #f33, #fd3, #3d5, #3df, #47f, #e3e, #f33); }
.help-mark { font: 700 12px "Noto Sans", sans-serif; fill: #fff; text-anchor: middle; }

/* doc tab */
.doctab { position: absolute; left: 353px; top: 0; width: 76px; height: 77px; padding: 22px 4px 0 5px; background: #0073c2; border: 1px solid #0a5e96; border-top: 0; }
.doctab-gear { position: absolute; left: 3px; top: 6px; }
.doctab-thumb { width: 67px; height: 50px; background: #fff; }
.doctab-more { position: absolute; left: 435px; top: 33px; }

/* toolbars */
.toolbar { display: flex; align-items: center; flex: none; background: #1e1e1e; }
.row-one { height: 27px; padding-left: 3px; }
.row-two { height: 29px; padding: 1px 0 0 8px; border-bottom: 1px solid #5a5a5a; }
.tb { display: flex; align-items: center; justify-content: center; width: 23px; height: 23px; }
.tb-sep { width: 1px; height: 20px; margin: 0 5px; background: #3a3a3a; }
.sep { width: 1px; height: 20px; background: #3a3a3a; flex: none; }
.lbl { white-space: nowrap; color: #ececec; flex: none; }
.caret { width: 0; height: 0; flex: none; border-left: 3px solid transparent; border-right: 3px solid transparent; border-top: 3px solid #f0f0f0; }
.caret-up { border-top: 0; border-bottom: 3px solid #f0f0f0; }
.w-14 { width: 14px; } .w-17 { width: 17px; } .w-28 { width: 28px; } .w-29 { width: 29px; } .w-30 { width: 30px; } .w-39 { width: 39px; } .w-45 { width: 45px; } .w-52 { width: 52px; } .w-54 { width: 54px; } .w-66 { width: 66px; }
.ml-3 { margin-left: 3px; } .ml-4 { margin-left: 4px; } .ml-5 { margin-left: 5px; } .ml-6 { margin-left: 6px; } .ml-7 { margin-left: 7px; } .ml-8 { margin-left: 8px; } .ml-9 { margin-left: 9px; } .ml-10 { margin-left: 10px; } .ml-12 { margin-left: 12px; } .ml-13 { margin-left: 13px; } .ml-14 { margin-left: 14px; } .ml-43 { margin-left: 43px; } .ml-49 { margin-left: 49px; }
.fill-select { display: flex; width: 119px; height: 22px; border: 1px solid #f0f0f0; flex: none; }
.fill-value { flex: 1; padding-left: 3px; line-height: 19px; background: #1e1e1e; color: #f0f0f0; }
.fill-drop { display: flex; align-items: center; justify-content: center; width: 18px; background: #f0f0f0; }
.stepper { position: relative; width: 9px; height: 9px; background: #f4f4f4; flex: none; }
.step-h { position: absolute; left: 2px; top: 4px; width: 5px; height: 1px; background: #1e1e1e; }
.step-v { position: absolute; left: 4px; top: 2px; width: 1px; height: 5px; background: #1e1e1e; }
.tolerance { width: 175px; height: 23px; background: #cdcdcd; border: 1px solid #b8b8b8; flex: none; }
.tol-fill { width: 87px; height: 21px; padding-left: 2px; line-height: 21px; background: #0078d7; color: #e8f2fa; }
.layer-swatch { width: 16px; height: 16px; background: #36618f; border: 1px solid #6a8aaa; flex: none; }

/* workspace */
.workspace { position: relative; display: flex; align-items: center; justify-content: center; flex: 1; min-height: 0; background: #2f2f2f; }
.canvas { width: 800px; height: 600px; background: #fff; }
.win-head { display: flex; align-items: center; justify-content: space-between; height: 31px; background: #009dbe; color: #e8f6fa; }
.win-close { display: flex; align-items: center; justify-content: center; width: 19px; height: 18px; background: #d44a4a; color: #fff; font-weight: 700; font-size: 11px; }
.tools-win { position: absolute; left: 8px; top: 5px; width: 51px; height: 283px; background: #232323; }
.tools-head { padding: 2px 1px 0 8px; }
.tools-grid { display: grid; grid-template-columns: 25px 25px; grid-auto-rows: 25px; padding-left: .5px; }
.tool { display: flex; align-items: center; justify-content: center; }
.tool.selected { background: #1c4668; border: 1px solid #0a74c8; }
.tool-text { font-family: "Liberation Serif", serif; font-size: 24px; color: #8a8a8a; letter-spacing: 0; }
.tool-wide { grid-column: span 2; height: 26px; }
.grad-tool { width: 15px; height: 15px; background: linear-gradient(135deg, #3a6fd8, #a64ed8); border: 1px solid #f0f0f0; }

.colors-win { position: absolute; right: 8px; top: 5px; width: 209px; height: 249px; background: #232323; }
.colors-head { padding: 0 2px 0 8px; }
.colors-body { padding: 8px 0 0 8px; }
.colors-top { display: flex; align-items: flex-start; gap: 7px; }
.primary-select { display: flex; align-items: center; justify-content: space-between; width: 112px; height: 23px; padding: 1px 5px 0 3px; background: #e1e1e1; border: 1px solid #cfcfcf; color: #222; }
.more-btn { width: 73px; height: 21px; line-height: 18px; text-align: center; background: #e1e1e1; border: 1px solid #cfcfcf; color: #222; letter-spacing: 0; }
.colors-mid { display: flex; margin-top: 5px; height: 140px; }
.swatch-col { display: flex; flex-direction: column; justify-content: space-between; width: 50px; }
.swatches { position: relative; height: 44px; }
.sw-primary { position: absolute; left: 0; top: 0; width: 28px; height: 28px; background: #f00; border: 1px solid #fff; outline: 1px solid #000; }
.sw-secondary { position: absolute; left: 16px; top: 16px; width: 28px; height: 28px; background: #fff; border: 1px solid #000; }
.sw-mini-b { position: absolute; left: 0; top: 30px; width: 10px; height: 10px; background: #000; border: 1px solid #444; }
.sw-mini-w { position: absolute; left: 4px; top: 34px; width: 10px; height: 10px; background: #fff; }
.sw-swap { position: absolute; left: 32px; top: 3px; }
.swatch-tools { display: flex; align-items: center; gap: 8px; }
.wheel { position: relative; width: 140px; height: 140px; border-radius: 50%; background: radial-gradient(circle closest-side, #fff 0%, rgba(255,255,255,0) 100%), conic-gradient(from 90deg, #f00, #ff0, #0f0, #0ff, #00f, #f0f, #f00); }
.wheel-marker { position: absolute; right: -4px; top: 66px; width: 8px; height: 8px; border-radius: 50%; background: #e00020; border: 1px solid #fff; outline: 1px solid #000; }
.palette-rule { width: 193px; height: 1px; margin-top: 8px; background: #e0e0e0; }
.palette { display: grid; grid-template-columns: repeat(16, 12px); grid-auto-rows: 12px; margin-top: 4px; }
.c-000000 { background: #000000; } .c-404040 { background: #404040; } .c-ff0000 { background: #ff0000; } .c-ff6a00 { background: #ff6a00; } .c-ffd800 { background: #ffd800; } .c-b6ff00 { background: #b6ff00; } .c-4cff00 { background: #4cff00; } .c-00ff21 { background: #00ff21; } .c-00ff90 { background: #00ff90; } .c-00ffff { background: #00ffff; } .c-0094ff { background: #0094ff; } .c-0026ff { background: #0026ff; } .c-4800ff { background: #4800ff; } .c-b200ff { background: #b200ff; } .c-ff00dc { background: #ff00dc; } .c-ff006e { background: #ff006e; }
.c-ffffff { background: #ffffff; } .c-808080 { background: #808080; } .c-7f0000 { background: #7f0000; } .c-7f3300 { background: #7f3300; } .c-7f6a00 { background: #7f6a00; } .c-5b7f00 { background: #5b7f00; } .c-267f00 { background: #267f00; } .c-007f0e { background: #007f0e; } .c-007f46 { background: #007f46; } .c-007f7f { background: #007f7f; } .c-004a7f { background: #004a7f; } .c-00137f { background: #00137f; } .c-21007f { background: #21007f; } .c-57007f { background: #57007f; } .c-7f006e { background: #7f006e; } .c-7f0037 { background: #7f0037; }

/* status bar */
.statusbar { display: flex; align-items: center; flex: none; height: 25px; padding-right: 17px; background: #1e1e1e; }
.status-tool { margin-left: 1px; }
.status-text { color: #ececec; }
.status-right { display: flex; align-items: center; margin-left: auto; }
.zoom-slider { position: relative; width: 87px; height: 2px; background: #e8e8e8; }
.zoom-thumb { position: absolute; left: 38px; top: -8px; width: 9px; height: 18px; background: #d8d8d8; clip-path: polygon(0 0, 100% 0, 100% 70%, 50% 100%, 0 70%); }

/* taskbar */
.taskbar { display: flex; align-items: center; flex: none; height: 40px; background: #1c1c1c; letter-spacing: 0; }
.start { display: flex; align-items: center; justify-content: center; width: 48px; height: 40px; }
.search { display: flex; align-items: center; gap: 12px; width: 344px; height: 40px; margin-right: 1px; padding-left: 12px; background: #333; border: 1px solid #4c4c4c; border-bottom-color: #333; color: #d4d4d4; font-size: 14.3px; letter-spacing: -.2px; }
.task { position: relative; display: flex; align-items: center; justify-content: center; width: 45.87px; height: 40px; flex: none; }
.taskview { width: 46px; margin-right: 3.6px; }
.task.active { background: #484848; }
.task.running::after { content: ""; position: absolute; left: 4.5px; right: 4.5px; bottom: 0; height: 2px; background: #76dff0; }
.task.active.running::after { left: 0; right: 0; }
.rockstar { display: block; width: 24px; height: 24px; border-radius: 4px; background: #f7b11e; color: #111; font: italic 700 17px/24px "Liberation Sans", sans-serif; text-align: center; }
.rockstar sub { font-size: 7px; line-height: 0; color: #fff; }
.tray { display: flex; align-items: center; flex: 1; height: 40px; padding-left: 3.5px; }
.tray-item { display: flex; align-items: center; justify-content: center; width: 24px; height: 40px; flex: none; }
.tray-item.narrow { width: 20px; }
.tray-item.gap { margin-left: 3px; }
.tray-item.small { width: 22px; }
.clock { display: flex; flex-direction: column; align-items: center; width: 65px; line-height: 17px; color: #f0f0f0; letter-spacing: 0; }
.notify { position: relative; display: flex; justify-content: center; width: 36px; margin-left: 3px; }
.notify-badge { position: absolute; left: 19px; top: 8px; width: 16px; height: 16px; line-height: 14px; border: 1px solid #bbb; border-radius: 50%; background: #2a2a2a; color: #fff; font-size: 10px; text-align: center; }
.show-desktop { width: 1px; height: 40px; margin-left: 7.5px; background: #5a5a5a; }
```
